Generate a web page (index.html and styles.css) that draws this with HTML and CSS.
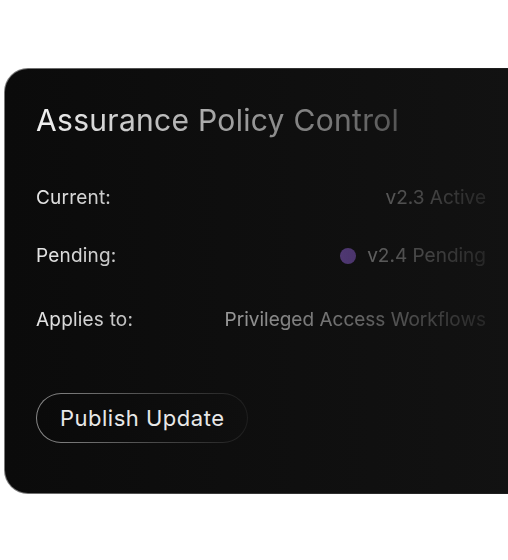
FILE: index.html
```html
<!DOCTYPE html>
<html>
<head>
<meta charset="utf-8">
<link rel="stylesheet" href="styles.css">
</head>
<body>
<div class="stage">
  <section class="card">
    <div class="fade">
      <h1 class="title">Assurance Policy Control</h1>
      <div class="row row-current">
        <span class="label">Current:</span>
        <span class="value">v2.3 Active</span>
      </div>
      <div class="row row-pending">
        <span class="label">Pending:</span>
        <span class="value"><span class="dot"></span>v2.4 Pending</span>
      </div>
      <div class="row row-applies">
        <span class="label">Applies to:</span>
        <span class="value">Privileged Access Workflows</span>
      </div>
    </div>
    <button class="publish">Publish Update</button>
  </section>
</div>
</body>
</html>
```

FILE: styles.css
```css
html, body {
  margin: 0;
  padding: 0;
  background: #ffffff;
  overflow: hidden;
}
body {
  width: 508px;
  height: 560px;
  font-family: "Inter", "Noto Sans", sans-serif;
}
.stage {
  padding: 68px 0 0 4px;
}
.card {
  box-sizing: border-box;
  width: 514px;
  height: 426px;
  border-radius: 24px 0 0 24px;
  border: 1.5px solid transparent;
  border-right: 0;
  background:
    linear-gradient(90deg, #0b0b0b, #121212) padding-box,
    linear-gradient(90deg, #7a7a7a 0%, #3a3a3a 40%, #1c1c1c 100%) border-box;
  padding: 32px 32px 0 31px;
  color: #e6e6e6;
}
.fade {
  -webkit-mask-image: linear-gradient(90deg, #000 0%, rgba(0,0,0,0.42) 70%, rgba(0,0,0,0.1) 100%);
  mask-image: linear-gradient(90deg, #000 0%, rgba(0,0,0,0.42) 70%, rgba(0,0,0,0.1) 100%);
}
.title {
  margin: 0;
  font-size: 30px;
  font-weight: 400;
  line-height: 38px;
  color: #f2f2f2;
  letter-spacing: 0.3px;
}
.row {
  display: flex;
  justify-content: space-between;
  align-items: center;
  font-size: 19px;
  line-height: 24px;
}
.row-current { margin-top: 47px; }
.row-pending { margin-top: 34px; }
.row-applies { margin-top: 40px; }
.label {
  color: #e6e6e6;
  letter-spacing: 0.2px;
}
.value {
  display: flex;
  align-items: center;
  color: #e6e6e6;
}
.dot {
  width: 16px;
  height: 16px;
  border-radius: 50%;
  background: #a06bf0;
  margin-right: 11px;
}
.publish {
  margin-top: 61px;
  height: 50px;
  padding: 0 23px;
  font-family: inherit;
  font-size: 22px;
  letter-spacing: 0.5px;
  color: #e8e8e8;
  border-radius: 25px;
  border: 1.5px solid transparent;
  background:
    linear-gradient(90deg, #0a0a0a, #0f0f0f) padding-box,
    linear-gradient(90deg, #8a8a8a 0%, #4a4a4a 55%, #1e1e1e 100%) border-box;
}
```
